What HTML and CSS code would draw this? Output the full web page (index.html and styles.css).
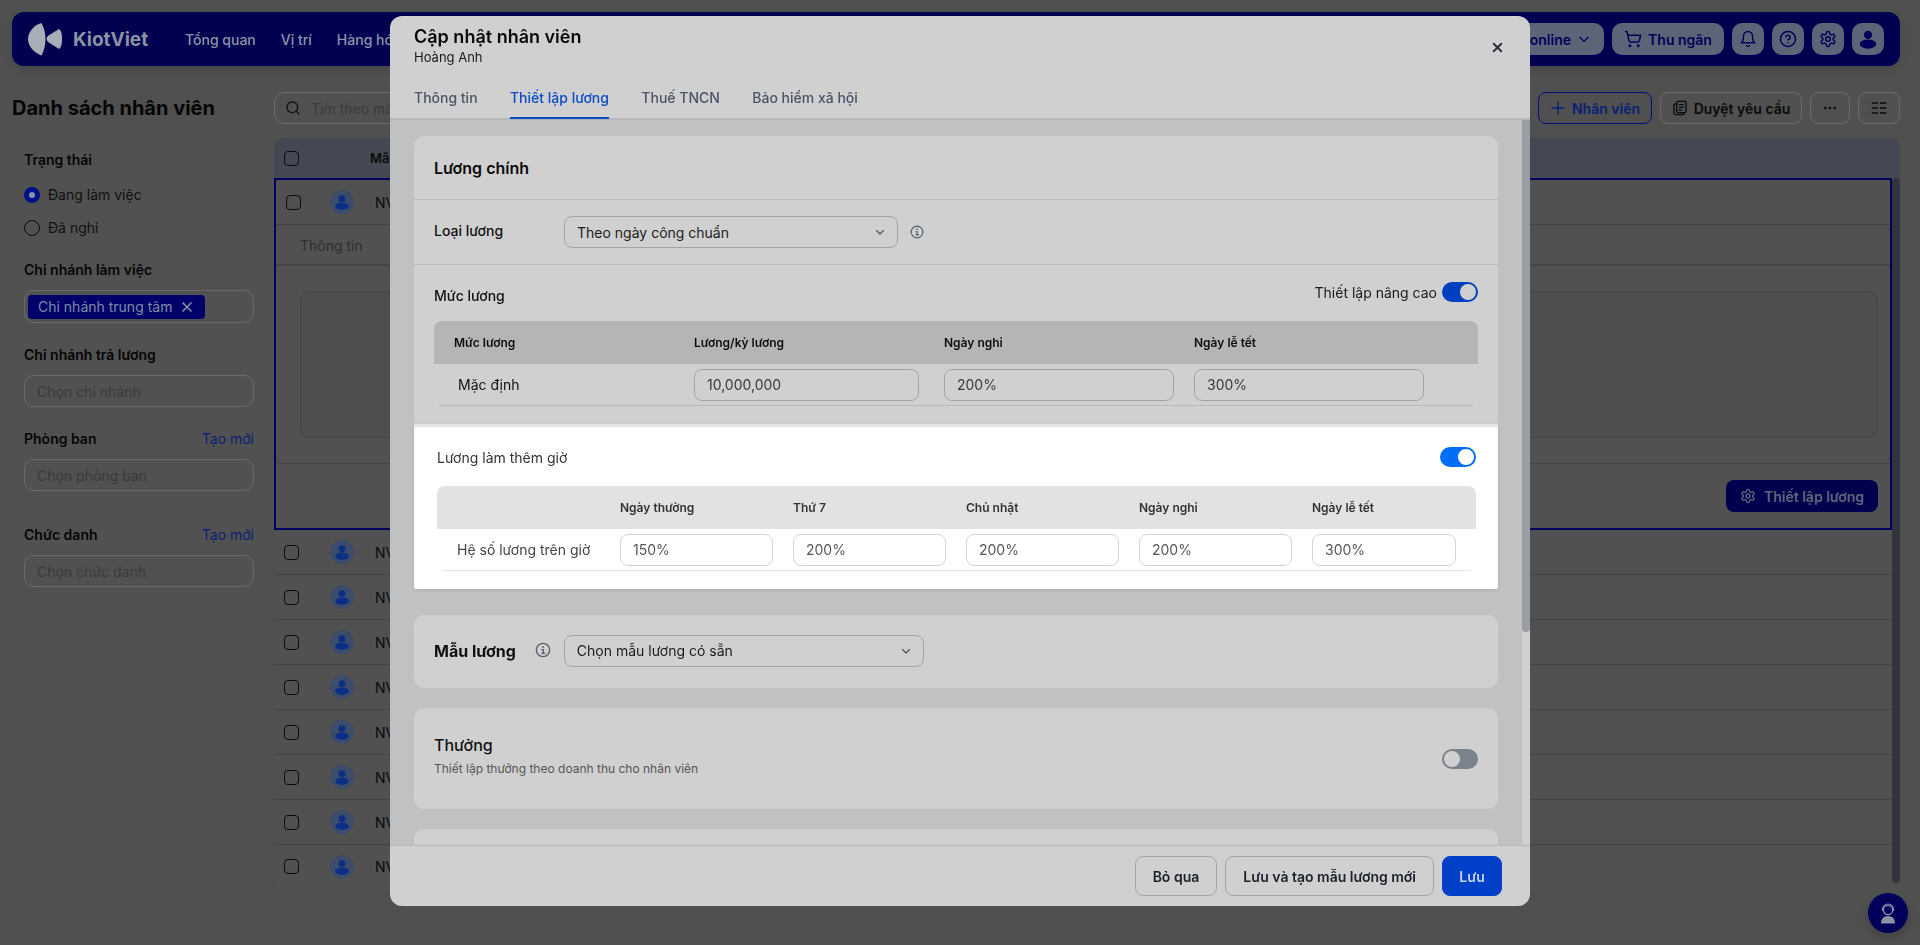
FILE: index.html
```html
<!DOCTYPE html>
<html lang="en">

<head>
  <meta charset="UTF-8" />
  <meta name="viewport" content="width=device-width, initial-scale=1.0" />
  <title>Danh sách nhân viên</title>
  <link rel="stylesheet" href="styles.css">
</head>

<body>
  <svg class="defs" aria-hidden="true">
    <symbol id="i-user" viewBox="0 0 24 24">
      <circle cx="12" cy="7.5" r="4.5" fill="currentColor" />
      <ellipse cx="12" cy="17.5" rx="9" ry="5" fill="currentColor" />
    </symbol>
    <symbol id="i-gear" viewBox="0 0 24 24">
      <path fill="none" stroke="currentColor" stroke-width="2" stroke-linecap="round" stroke-linejoin="round" d="M12.22 2h-.44a2 2 0 0 0-2 2v.18a2 2 0 0 1-1 1.73l-.43.25a2 2 0 0 1-2 0l-.15-.08a2 2 0 0 0-2.73.73l-.22.38a2 2 0 0 0 .73 2.73l.15.1a2 2 0 0 1 1 1.72v.51a2 2 0 0 1-1 1.74l-.15.09a2 2 0 0 0-.73 2.73l.22.38a2 2 0 0 0 2.73.73l.15-.08a2 2 0 0 1 2 0l.43.25a2 2 0 0 1 1 1.73V20a2 2 0 0 0 2 2h.44a2 2 0 0 0 2-2v-.18a2 2 0 0 1 1-1.73l.43-.25a2 2 0 0 1 2 0l.15.08a2 2 0 0 0 2.73-.73l.22-.39a2 2 0 0 0-.73-2.73l-.15-.08a2 2 0 0 1-1-1.74v-.5a2 2 0 0 1 1-1.74l.15-.09a2 2 0 0 0 .73-2.73l-.22-.38a2 2 0 0 0-2.73-.73l-.15.08a2 2 0 0 1-2 0l-.43-.25a2 2 0 0 1-1-1.73V4a2 2 0 0 0-2-2z" />
      <circle cx="12" cy="12" r="3" fill="none" stroke="currentColor" stroke-width="2" />
    </symbol>
    <symbol id="i-chev" viewBox="0 0 24 24">
      <path fill="none" stroke="currentColor" stroke-width="2.2" stroke-linecap="round" stroke-linejoin="round" d="m5 9 7 7 7-7" />
    </symbol>
    <symbol id="i-info" viewBox="0 0 24 24">
      <circle cx="12" cy="12" r="10" fill="none" stroke="currentColor" stroke-width="2" />
      <path fill="none" stroke="currentColor" stroke-width="2" d="M9.5 11.5H12.5V17M9.5 17h6" />
      <circle cx="12" cy="7.5" r="1.4" fill="currentColor" />
    </symbol>
  </svg>

  <div class="page">
    <header class="topbar">
      <div class="logo">
        <svg class="logo-mark" viewBox="0 0 34 34">
          <path d="M13.5 1C6 3 0 10 0 17c0 7 6 14 13.5 16.5 2.700-5 4-11 4-16.500S16.200 6 13.500 1z" />
          <path d="M31 7 20.500 13.500c-2.500 1.800-2.500 5 0 6.800L31 27c2.500-1.500 3-6 3-10s-.5-8.500-3-10z" />
        </svg>
        <span>KiotViet</span>
      </div>
      <nav class="main-nav">
        <a href="#">Tổng quan</a>
        <a href="#">Vị trí</a>
        <a href="#">Hàng hóa</a>
      </nav>
      <div class="top-actions">
        <button class="top-btn">Bán online
          <svg class="ico-14"><use href="#i-chev" /></svg>
        </button>
        <button class="top-btn">
          <svg class="ico-18" viewBox="0 0 24 24" fill="none" stroke="currentColor" stroke-width="2" stroke-linecap="round" stroke-linejoin="round">
            <circle cx="8" cy="21" r="1" />
            <circle cx="19" cy="21" r="1" />
            <path d="M2.050 2.050h2l2.660 12.420a2 2 0 0 0 2 1.580h9.780a2 2 0 0 0 1.950-1.570l1.650-7.430H5.120" />
          </svg>
          Thu ngân
        </button>
        <button class="top-icon">
          <svg class="ico-18" viewBox="0 0 24 24" fill="none" stroke="currentColor" stroke-width="2" stroke-linecap="round" stroke-linejoin="round">
            <path d="M6 8a6 6 0 0 1 12 0c0 7 3 9 3 9H3s3-2 3-9" />
            <path d="M10.300 21a1.940 1.940 0 0 0 3.400 0" />
          </svg>
        </button>
        <button class="top-icon">
          <svg class="ico-18" viewBox="0 0 24 24" fill="none" stroke="currentColor" stroke-width="2" stroke-linecap="round" stroke-linejoin="round">
            <circle cx="12" cy="12" r="10" />
            <path d="M9.090 9a3 3 0 0 1 5.830 1c0 2-3 3-3 3" />
            <path d="M12 17h.01" />
          </svg>
        </button>
        <button class="top-icon">
          <svg class="ico-18"><use href="#i-gear" /></svg>
        </button>
        <button class="top-icon">
          <svg class="ico-22"><use href="#i-user" /></svg>
        </button>
      </div>
    </header>

    <div class="toolbar">
      <h1 class="page-title">Danh sách nhân viên</h1>
      <div class="search">
        <svg class="ico-16" viewBox="0 0 24 24" fill="none" stroke="currentColor" stroke-width="2" stroke-linecap="round">
          <circle cx="11" cy="11" r="8" />
          <path d="m21 21-4.300-4.300" />
        </svg>
        <span>Tìm theo mã, tên nhân viên</span>
      </div>
      <button class="tool-btn tool-primary">
        <svg class="ico-16" viewBox="0 0 24 24" fill="none" stroke="currentColor" stroke-width="2" stroke-linecap="round">
          <path d="M12 3v18M3 12h18" />
        </svg>
        Nhân viên
      </button>
      <button class="tool-btn tool-approve">
        <svg class="ico-16" viewBox="0 0 24 24" fill="none" stroke="currentColor" stroke-width="2" stroke-linecap="round" stroke-linejoin="round">
          <rect x="7" y="2" width="14" height="17" rx="2" />
          <path d="M7 6H5a2 2 0 0 0-2 2v11a3 3 0 0 0 3 3h10a2 2 0 0 0 2-2v-1" />
          <path d="M11 7h6M11 11h6M11 15h3" />
        </svg>
        Duyệt yêu cầu
      </button>
      <button class="tool-btn tool-more">
        <svg class="ico-16" viewBox="0 0 24 24" fill="currentColor">
          <circle cx="5" cy="12" r="2" />
          <circle cx="12" cy="12" r="2" />
          <circle cx="19" cy="12" r="2" />
        </svg>
      </button>
      <button class="tool-btn tool-cols">
        <svg class="ico-16" viewBox="0 0 24 24" fill="none" stroke="currentColor" stroke-width="2.400">
          <path d="M1 4.500h9.500M13.500 4.500H23M1 12h9.500M13.500 12H23M1 19.500h9.500M13.500 19.500H23" />
        </svg>
      </button>
    </div>

    <div class="content">
      <aside class="filters">
        <div class="filter-group">
          <div class="filter-label">Trạng thái</div>
          <div class="radio-list">
            <label class="radio-row"><span class="radio radio-on"></span>Đang làm việc</label>
            <label class="radio-row"><span class="radio"></span>Đã nghỉ</label>
          </div>
        </div>
        <div class="filter-group">
          <div class="filter-label">Chi nhánh làm việc</div>
          <div class="filter-input filter-tags">
            <span class="tag">Chi nhánh trung tâm
              <svg class="ico-12" viewBox="0 0 24 24" fill="none" stroke="currentColor" stroke-width="3.500" stroke-linecap="round">
                <path d="M4 4l16 16M20 4 4 20" />
              </svg>
            </span>
          </div>
        </div>
        <div class="filter-group">
          <div class="filter-label">Chi nhánh trả lương</div>
          <div class="filter-input">Chọn chi nhánh</div>
        </div>
        <div class="filter-group filter-wide">
          <div class="filter-label">Phòng ban <a href="#">Tạo mới</a></div>
          <div class="filter-input">Chọn phòng ban</div>
        </div>
        <div class="filter-group">
          <div class="filter-label">Chức danh <a href="#">Tạo mới</a></div>
          <div class="filter-input">Chọn chức danh</div>
        </div>
      </aside>

      <section class="staff-table">
        <div class="table-head">
          <span class="check"></span>
          <span class="head-code">Mã nhân viên</span>
        </div>
        <div class="table-scroll">
          <div class="table-rows">
            <div class="row-open">
              <div class="row row-first">
                <span class="check"></span>
                <span class="avatar"><svg><use href="#i-user" /></svg></span>
                <span class="code">NV000001</span>
              </div>
              <div class="detail-tabs"><span>Thông tin</span></div>
              <div class="detail-body">
                <div class="detail-box"></div>
              </div>
              <div class="detail-foot">
                <button class="setup-btn">
                  <svg class="ico-16"><use href="#i-gear" /></svg>
                  Thiết lập lương
                </button>
              </div>
            </div>
            <div class="row"><span class="check"></span><span class="avatar"><svg><use href="#i-user" /></svg></span><span class="code">NV000002</span></div>
            <div class="row"><span class="check"></span><span class="avatar"><svg><use href="#i-user" /></svg></span><span class="code">NV000003</span></div>
            <div class="row"><span class="check"></span><span class="avatar"><svg><use href="#i-user" /></svg></span><span class="code">NV000004</span></div>
            <div class="row"><span class="check"></span><span class="avatar"><svg><use href="#i-user" /></svg></span><span class="code">NV000005</span></div>
            <div class="row"><span class="check"></span><span class="avatar"><svg><use href="#i-user" /></svg></span><span class="code">NV000006</span></div>
            <div class="row"><span class="check"></span><span class="avatar"><svg><use href="#i-user" /></svg></span><span class="code">NV000007</span></div>
            <div class="row"><span class="check"></span><span class="avatar"><svg><use href="#i-user" /></svg></span><span class="code">NV000008</span></div>
            <div class="row"><span class="check"></span><span class="avatar"><svg><use href="#i-user" /></svg></span><span class="code">NV000009</span></div>
          </div>
          <div class="table-bar"></div>
        </div>
      </section>
    </div>
  </div>

  <button class="help-float">
    <svg viewBox="0 0 24 24" class="ico-24">
      <path d="M6.500 10V8.500a5.500 5.500 0 0 1 11 0V10" fill="none" stroke="currentColor" stroke-width="1.200" />
      <circle cx="12" cy="9" r="4.600" fill="none" stroke="currentColor" stroke-width="1.200" />
      <path d="M5 22.500c0-4.500 2.500-7.500 7-7.500s7 3 7 7.500z" fill="currentColor" />
    </svg>
  </button>

  <!-- Modal -->
  <div class="modal">
    <div class="modal-head">
      <div class="modal-title">
        <h2>Cập nhật nhân viên</h2>
        <p>Hoàng Anh</p>
      </div>
      <svg class="modal-close" viewBox="0 0 24 24" fill="none" stroke="currentColor" stroke-width="3.600" stroke-linecap="round">
        <path d="M5 5l14 14M19 5 5 19" />
      </svg>
    </div>
    <div class="modal-tabs">
      <a href="#">Thông tin</a>
      <a href="#" class="active">Thiết lập lương</a>
      <a href="#">Thuế TNCN</a>
      <a href="#">Bảo hiểm xã hội</a>
    </div>

    <div class="modal-body">
      <div class="modal-scroll">
        <div class="card card-main">
          <div class="card-title">Lương chính</div>
          <div class="form-row">
            <span class="form-label">Loại lương</span>
            <div class="select select-type">Theo ngày công chuẩn
              <svg class="ico-12"><use href="#i-chev" /></svg>
            </div>
            <svg class="info ico-16"><use href="#i-info" /></svg>
          </div>

          <div class="salary-block">
            <div class="block-head">
              <span class="form-label">Mức lương</span>
              <div class="advanced">Thiết lập nâng cao <span class="toggle toggle-on"></span></div>
            </div>
            <div class="grid-head salary-head">
              <span>Mức lương</span>
              <span>Lương/kỳ lương</span>
              <span>Ngày nghỉ</span>
              <span>Ngày lễ tết</span>
            </div>
            <div class="grid-row salary-row">
              <span>Mặc định</span>
              <div class="field field-narrow">10,000,000</div>
              <div class="field">200%</div>
              <div class="field">300%</div>
            </div>
          </div>

          <div class="overtime">
            <div class="block-head">
              <span class="overtime-title">Lương làm thêm giờ</span>
              <span class="toggle toggle-bright"></span>
            </div>
            <div class="grid-head ot-head">
              <span></span>
              <span>Ngày thường</span>
              <span>Thứ 7</span>
              <span>Chủ nhật</span>
              <span>Ngày nghỉ</span>
              <span>Ngày lễ tết</span>
            </div>
            <div class="grid-row ot-row">
              <span>Hệ số lương trên giờ</span>
              <div class="field">150%</div>
              <div class="field">200%</div>
              <div class="field">200%</div>
              <div class="field">200%</div>
              <div class="field field-last">300%</div>
            </div>
          </div>
        </div>

        <div class="card card-template">
          <span class="template-title">Mẫu lương</span>
          <svg class="info ico-16"><use href="#i-info" /></svg>
          <div class="select select-template">Chọn mẫu lương có sẵn
            <svg class="ico-12"><use href="#i-chev" /></svg>
          </div>
        </div>

        <div class="card card-bonus">
          <div class="bonus-text">
            <div class="bonus-title">Thưởng</div>
            <div class="bonus-sub">Thiết lập thưởng theo doanh thu cho nhân viên</div>
          </div>
          <span class="toggle toggle-off"></span>
        </div>

        <div class="card card-next"></div>
      </div>
      <div class="modal-bar"><div class="modal-thumb"></div></div>
    </div>

    <div class="modal-foot">
      <button class="foot-btn">Bỏ qua</button>
      <button class="foot-btn">Lưu và tạo mẫu lương mới</button>
      <button class="foot-btn foot-save">Lưu</button>
    </div>
  </div>
</body>

</html>
```

FILE: styles.css
```css
* {
  margin: 0;
  padding: 0;
  box-sizing: border-box;
}

html,
body {
  height: 100%;
  overflow: hidden;
}

body {
  font-family: Inter, "Noto Sans", sans-serif;
  font-size: 14px;
  color: #0a0a0a;
  background: #4f504f;
}

button {
  font-family: inherit;
  cursor: pointer;
  white-space: nowrap;
}

a {
  text-decoration: none;
}

.defs {
  display: none;
}

.ico-12 { width: 12px; height: 12px; flex: none; }
.ico-14 { width: 14px; height: 14px; flex: none; }
.ico-16 { width: 16px; height: 16px; flex: none; }
.ico-18 { width: 18px; height: 18px; flex: none; }
.ico-22 { width: 22px; height: 22px; flex: none; }
.ico-24 { width: 24px; height: 24px; flex: none; }

.page {
  padding: 12px 20px 13px 12px;
  height: 945px;
  display: flex;
  flex-direction: column;
}

/* Top bar */
.topbar {
  display: flex;
  align-items: center;
  height: 54px;
  padding: 0 16px;
  background: #000050;
  border-radius: 12px;
  box-shadow: 0 4px 10px rgba(0, 0, 0, 0.12);
}

.logo {
  display: flex;
  align-items: center;
  gap: 11px;
  width: 157px;
  font-size: 19px;
  font-weight: 700;
  color: #8a93a3;
}

.logo-mark {
  width: 34px;
  height: 34px;
  fill: #a9adb5;
}

.main-nav {
  display: flex;
  gap: 25px;
}

.main-nav a {
  font-size: 14px;
  font-weight: 500;
  color: #8a95a8;
}

.top-actions {
  display: flex;
  gap: 8px;
  margin-left: auto;
}

.top-btn,
.top-icon {
  display: flex;
  align-items: center;
  justify-content: center;
  height: 32px;
  border: none;
  border-radius: 10px;
  background: #5c6577;
  color: #00005a;
  font-size: 14px;
  font-weight: 600;
}

.top-btn {
  gap: 6px;
  padding: 0 13px;
}

.top-btn:nth-child(2) {
  width: 112px;
  padding: 0;
}

.top-icon {
  width: 32px;
}

/* Toolbar */
.toolbar {
  display: flex;
  align-items: center;
  gap: 8px;
  height: 32px;
  margin-top: 26px;
}

.page-title {
  width: 254px;
  font-size: 20px;
  font-weight: 700;
  color: #050505;
}

.search {
  flex: 1;
  min-width: 0;
  display: flex;
  align-items: center;
  gap: 10px;
  height: 32px;
  padding: 0 10px;
  border: 1px solid #6b6b6b;
  border-radius: 10px;
  color: #3c3c3c;
}

.search svg {
  color: #111;
}

.tool-btn {
  flex: none;
  display: flex;
  align-items: center;
  justify-content: center;
  gap: 6px;
  height: 32px;
  padding: 0;
  background: none;
  border: 1px solid #6b6b6b;
  border-radius: 8px;
  color: #0a0a0a;
  font-size: 14px;
  font-weight: 600;
}

.tool-primary {
  width: 114px;
  border-color: #00107a;
  color: #0a1f75;
}

.tool-approve {
  width: 142px;
}

.tool-more {
  width: 40px;
}

.tool-cols {
  width: 42px;
}

/* Content */
.content {
  flex: 1;
  display: flex;
  gap: 12px;
  margin-top: 14px;
  min-height: 0;
}

.filters {
  width: 250px;
  padding: 12px 8px 0 12px;
  background: #515151;
  border-radius: 10px;
}

.filter-group {
  margin-bottom: 22px;
}

.filter-wide {
  margin-bottom: 34px;
}

.filter-label {
  display: flex;
  justify-content: space-between;
  line-height: 20px;
  font-weight: 600;
  color: #050505;
}

.filter-label a {
  font-weight: 400;
  color: #0a1f75;
}

.radio-list {
  display: flex;
  flex-direction: column;
  gap: 13px;
  margin-top: 15px;
}

.radio-row {
  display: flex;
  align-items: center;
  gap: 8px;
  line-height: 20px;
  color: #101010;
}

.radio {
  width: 16px;
  height: 16px;
  border: 1px solid #0d0d14;
  border-radius: 50%;
}

.radio-on {
  border: 5px solid #00108a;
  background: #8c93a6;
}

.filter-input {
  display: flex;
  align-items: center;
  height: 32px;
  margin-top: 10px;
  padding: 0 12px;
  border: 1px solid #6b6b6b;
  border-radius: 10px;
  color: #3a3a3a;
}

.filter-tags {
  height: 33px;
  padding: 0 3px;
}

.tag {
  display: flex;
  align-items: center;
  gap: 9px;
  width: 177px;
  height: 24px;
  padding: 0 7px 0 10px;
  border-radius: 4px;
  background: #00006a;
  color: #7f8ca5;
}

/* Table */
.staff-table {
  flex: 1;
  display: flex;
  flex-direction: column;
  min-width: 0;
}

.table-head {
  display: flex;
  align-items: center;
  height: 40px;
  padding-left: 10px;
  background: #434852;
  border-radius: 10px 10px 0 0;
  font-size: 13px;
  font-weight: 600;
}

.head-code {
  margin-left: 71px;
}

.table-scroll {
  display: flex;
}

.table-rows {
  flex: 1;
  min-width: 0;
}

.table-bar {
  width: 8px;
  height: 705px;
  background: #33343b;
  border-radius: 4px;
}

.check {
  width: 15px;
  height: 15px;
  flex: none;
  border: 1px solid #0b0b10;
  border-radius: 4px;
}

.avatar {
  display: flex;
  align-items: center;
  justify-content: center;
  width: 24px;
  height: 24px;
  margin-left: 31px;
  border-radius: 50%;
  background: #3c4c6a;
  color: #0c2f86;
}

.avatar svg {
  width: 18px;
  height: 18px;
}

.code {
  margin-left: 21px;
  white-space: nowrap;
}

.row {
  display: flex;
  align-items: center;
  height: 45px;
  padding-left: 10px;
  background: #515151;
  border-bottom: 1px solid #434343;
}

.row:last-child {
  height: 43px;
  border-bottom: none;
  border-radius: 0 0 0 10px;
}

.row-open {
  height: 352px;
  border: 2px solid #00005f;
  background: #515151;
}

.row-first {
  height: 45px;
  padding-left: 10px;
}

.row-first .avatar {
  margin-left: 29px;
}

.detail-tabs {
  display: flex;
  align-items: center;
  height: 41px;
  padding: 1px 0 0 24px;
  border-bottom: 2px solid #454545;
  color: #2e2e2e;
}

.detail-body {
  height: 198px;
  padding: 25px 12px 0 24px;
  border-bottom: 1px solid #454545;
}

.detail-box {
  height: 147px;
  border: 1px solid #454545;
  border-radius: 10px;
  background: #4e4e4e;
}

.detail-foot {
  display: flex;
  justify-content: flex-end;
  padding: 16px 12px 0 0;
}

.setup-btn {
  display: flex;
  align-items: center;
  justify-content: center;
  gap: 8px;
  width: 152px;
  height: 32px;
  border: none;
  border-radius: 8px;
  background: #00004f;
  color: #5c6678;
  font-size: 14px;
  font-weight: 600;
}

.help-float {
  position: fixed;
  right: 12px;
  bottom: 12px;
  display: flex;
  align-items: center;
  justify-content: center;
  width: 40px;
  height: 40px;
  border: none;
  border-radius: 50%;
  background: #00005a;
  color: #8b93a4;
  box-shadow: 0 4px 10px rgba(0, 0, 0, 0.2);
}

/* Modal */
.modal {
  position: fixed;
  left: 390px;
  top: 16px;
  display: flex;
  flex-direction: column;
  width: 1140px;
  height: 890px;
  overflow: hidden;
  border-radius: 12px;
  background: #d0d0d0;
}

.modal-head {
  display: flex;
  justify-content: space-between;
  height: 65px;
  padding: 9px 24px 0;
}

.modal-title h2 {
  font-size: 18px;
  line-height: 24px;
  font-weight: 600;
  color: #0a0a0a;
}

.modal-title p {
  font-size: 13px;
  line-height: 17px;
  color: #1a1a1a;
}

.modal-close {
  width: 13px;
  height: 13px;
  margin: 16px 2px 0 0;
  color: #2a2f3a;
}

.modal-tabs {
  display: flex;
  gap: 32.4px;
  height: 39px;
  padding: 0 24px;
  border-bottom: 2px solid #b5b6b7;
}

.modal-tabs a {
  height: 38px;
  padding-top: 8px;
  font-weight: 500;
  color: #4a5468;
  border-bottom: 2px solid transparent;
}

.modal-tabs a.active {
  color: #0a4bc8;
  border-bottom-color: #0a4bc8;
}

.modal-body {
  flex: 1;
  display: flex;
  min-height: 0;
  background: #c0c1c3;
}

.modal-scroll {
  flex: 1;
  display: flex;
  flex-direction: column;
  gap: 20px;
  padding: 16px 24px 0;
  min-width: 0;
  overflow: hidden;
}

.modal-bar {
  width: 8px;
  background: #cfd0d0;
}

.modal-thumb {
  height: 512px;
  background: #9a9da3;
  border-radius: 0 0 4px 4px;
}

.card {
  flex: none;
  background: #d0d0d0;
  border-radius: 10px;
}

.card-main {
  margin-bottom: 6px;
}

.card-title {
  height: 64px;
  padding: 21px 20px 0;
  border-bottom: 1px solid #b8b9ba;
  font-size: 16px;
  line-height: 22px;
  font-weight: 600;
}

.form-row {
  display: flex;
  align-items: center;
  height: 65px;
  padding: 0 20px;
  border-bottom: 1px solid #b8b9ba;
}

.form-label {
  font-weight: 500;
  color: #111;
}

.form-row .form-label {
  width: 130px;
  margin-top: -3px;
}

.select {
  display: flex;
  align-items: center;
  justify-content: space-between;
  height: 32px;
  padding: 0 11px 0 12px;
  border: 1px solid #a3a4a9;
  border-radius: 8px;
  color: #1c1c1c;
}

.select svg {
  color: #4a4a4a;
}

.select-type {
  width: 334px;
}

.select-template {
  width: 360px;
}

.info {
  color: #55606f;
}

.form-row .info {
  margin-left: 12px;
  width: 14px;
  height: 14px;
}

.salary-block {
  height: 159px;
  padding: 17px 20px 0;
}

.salary-block .form-label {
  margin-top: 6px;
}

.block-head {
  display: flex;
  align-items: center;
  justify-content: space-between;
  height: 20px;
  margin-bottom: 19px;
}

.advanced {
  display: flex;
  align-items: center;
  gap: 5px;
  color: #1a1a1a;
}

.toggle {
  position: relative;
  display: inline-block;
  width: 36px;
  height: 20px;
  border-radius: 10px;
}

.toggle::after {
  content: "";
  position: absolute;
  top: 2px;
  right: 2px;
  width: 16px;
  height: 16px;
  border-radius: 50%;
  background: #d0d0d0;
}

.toggle-on {
  background: #0040c0;
}

.toggle-bright {
  background: #006ef5;
}

.toggle-bright::after {
  background: #fff;
}

.toggle-off {
  background: #7c828c;
}

.toggle-off::after {
  right: auto;
  left: 2px;
}

.grid-head {
  display: grid;
  align-items: center;
  height: 43px;
  font-size: 12px;
  font-weight: 600;
  border-radius: 8px 8px 0 0;
}

.grid-row {
  display: grid;
  align-items: center;
  height: 42px;
  margin: 0 5px;
}

.salary-head {
  grid-template-columns: 260px 250px 250px 1fr;
  padding-left: 0;
  background: #b5b5b5;
  color: #0e0e0e;
}

.salary-head span:first-child {
  padding-left: 20px;
}

.salary-row {
  grid-template-columns: 255px 250px 250px 1fr;
  border-bottom: 1px solid #b8b9ba;
  color: #111;
}

.salary-row span {
  padding-left: 19px;
}

.field {
  display: flex;
  align-items: center;
  width: 230px;
  height: 32px;
  padding: 0 12px;
  border: 1px solid #a3a4a9;
  border-radius: 8px;
  color: #3a3a3a;
}

.field-narrow {
  width: 225px;
}

/* Highlighted section */
.overtime {
  padding: 20px 22px 18px 23px;
  border-top: 3px solid #e4e4e4;
  background: #fff;
  border-radius: 0 0 2px 2px;
  box-shadow: 0 1px 3px rgba(0, 0, 0, 0.12);
}

.overtime-title {
  color: #333;
}

.ot-head {
  grid-template-columns: 183px repeat(5, 173px);
  background: #e2e2e2;
  color: #333;
}

.ot-row {
  grid-template-columns: 178px repeat(5, 173px);
  border-bottom: 1px solid #e2e4e8;
  color: #444;
}

.ot-row span {
  padding-left: 15px;
}

.ot-row .field {
  width: 153px;
  border-color: #d0d3d8;
  color: #555;
}

.ot-row .field-last {
  width: 144px;
}

.card-template {
  display: flex;
  align-items: center;
  height: 73px;
  padding: 0 20px 2px;
}

.template-title {
  font-size: 16px;
  font-weight: 700;
  color: #111;
}

.card-template .info {
  margin: -2px 13px 0 19px;
}

.card-bonus {
  display: flex;
  align-items: center;
  justify-content: space-between;
  height: 101px;
  padding: 0 20px;
}

.bonus-text {
  padding-bottom: 8px;
}

.bonus-title {
  font-size: 16px;
  line-height: 24px;
  font-weight: 500;
  color: #111;
}

.bonus-sub {
  margin-top: 4px;
  font-size: 12px;
  line-height: 16px;
  color: #555;
}

.card-next {
  height: 60px;
}

.modal-foot {
  display: flex;
  justify-content: flex-end;
  gap: 8px;
  height: 61px;
  padding: 10px 28px 0 0;
  border-top: 1px solid #b8b9ba;
}

.foot-btn {
  height: 40px;
  padding: 0 17px;
  background: none;
  border: 1px solid #a3a4a9;
  border-radius: 8px;
  font-size: 14px;
  font-weight: 600;
  color: #1a202c;
}

.foot-save {
  width: 60px;
  padding: 0;
  border-color: #0040c8;
  background: #0040c8;
  color: #c8d4ea;
}
```
